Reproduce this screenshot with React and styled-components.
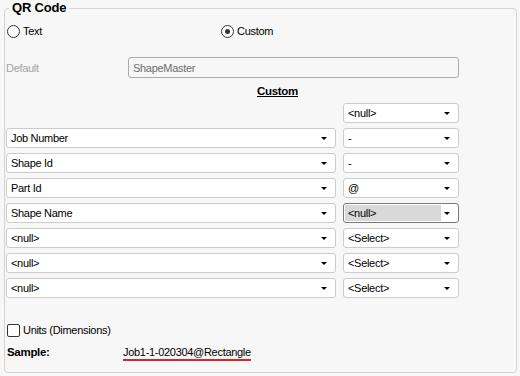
import React from "react";
import styled, { createGlobalStyle } from "styled-components";

const Global = createGlobalStyle`
  html, body { margin: 0; padding: 0; background: #f7f7f7; }
  body { font-family: "Liberation Sans", Arial, sans-serif; font-size: 11px; letter-spacing: -0.3px; color: #000; }
`;

const Page = styled.div`
  width: 520px;
  height: 376px;
  box-sizing: border-box;
  padding: 1px 3px 3px 4px;
  background: #f7f7f7;
`;

const Group = styled.fieldset`
  margin: 0;
  height: 100%;
  box-sizing: border-box;
  border: 1px solid #d3d3d3;
  border-radius: 4px;
  padding: 0 0 0 1px;
  display: flex;
  flex-direction: column;
`;

const Legend = styled.legend`
  margin-left: 3px;
  padding: 0 3px 0 3px;
  font-weight: bold;
  font-size: 13px;
  line-height: 14px;
  letter-spacing: -0.2px;
  color: #000;
`;

const RadioRow = styled.div`
  display: flex;
  align-items: center;
  height: 14px;
  margin-top: 9px;
`;

const RadioItem = styled.label`
  display: flex;
  align-items: center;
  gap: 3px;
  margin-left: ${(p) => p.$left || 0}px;
`;

const RadioCircle = styled.span`
  width: 11px;
  height: 11px;
  border-radius: 50%;
  border: 1px solid #333;
  background: #fff;
  display: flex;
  align-items: center;
  justify-content: center;
  &::after {
    content: "";
    width: 5px;
    height: 5px;
    border-radius: 50%;
    background: ${(p) => (p.$checked ? "#333" : "transparent")};
  }
`;

const DefaultRow = styled.div`
  display: flex;
  align-items: center;
  height: 21px;
  margin-top: 19px;
`;

const MutedLabel = styled.span`
  width: 122px;
  color: #a3a3a3;
`;

const TextBox = styled.div`
  width: 331px;
  height: 21px;
  box-sizing: border-box;
  border: 1px solid #ababab;
  border-radius: 3px;
  padding: 0 4px;
  display: flex;
  align-items: center;
  color: #6d6d6d;
  background: #f7f7f7;
`;

const Heading = styled.div`
  margin-top: 6px;
  height: 14px;
  line-height: 14px;
  padding-left: 251px;
  font-weight: bold;
  font-size: 11.5px;
  text-decoration: underline;
`;

const Grid = styled.div`
  display: grid;
  grid-template-columns: 330px 116px;
  column-gap: 7px;
  row-gap: 5px;
  margin-top: 5px;
`;

const Combo = styled.div`
  grid-column: ${(p) => p.$col};
  height: 20px;
  box-sizing: border-box;
  border: 1px solid ${(p) => (p.$focused ? "#7a7a7a" : "#cccccc")};
  border-radius: 3px;
  background: #fff;
  display: flex;
  align-items: center;
  padding: 1px;
`;

const ComboText = styled.div`
  flex: 1;
  height: 100%;
  display: flex;
  align-items: center;
  padding-left: 3px;
  background: ${(p) => (p.$focused ? "#d9d9d9" : "transparent")};
  margin-right: ${(p) => (p.$focused ? "-3px" : "0")};
  white-space: pre;
`;

const Arrow = styled.span`
  width: 0;
  height: 0;
  border-left: 3px solid transparent;
  border-right: 3px solid transparent;
  border-top: 3px solid #000;
  margin: 1px 7px 0 6px;
`;

const CheckRow = styled.label`
  display: flex;
  align-items: center;
  gap: 3px;
  margin-top: 25px;
  margin-left: 1px;
  height: 14px;
`;

const Box = styled.span`
  width: 11px;
  height: 11px;
  border: 1px solid #333;
  border-radius: 2px;
  background: #fff;
`;

const SampleRow = styled.div`
  display: flex;
  align-items: baseline;
  margin-top: 9px;
  margin-left: 1px;
`;

const SampleLabel = styled.span`
  width: 116px;
  font-weight: bold;
  font-size: 11.5px;
`;

const SampleValue = styled.span`
  padding-bottom: 1px;
  border-bottom: 2px solid #d9262a;
`;

const Dropdown = ({ col, value, focused }) => (
  <Combo $col={col} $focused={focused}>
    <ComboText $focused={focused}>{value}</ComboText>
    <Arrow />
  </Combo>
);

const rows = [
  [null, "<null>"],
  ["Job Number", "-"],
  ["Shape Id", "-"],
  ["Part Id", "@"],
  ["Shape Name", "<null>", true],
  ["<null>", "<Select>"],
  ["<null>", "<Select>"],
  ["<null>", "<Select>"],
];

export default function App() {
  return (
    <>
      <Global />
      <Page>
        <Group>
          <Legend>QR Code</Legend>
          <RadioRow>
            <RadioItem $left={1}>
              <RadioCircle />
              Text
            </RadioItem>
            <RadioItem $left={179}>
              <RadioCircle $checked />
              Custom
            </RadioItem>
          </RadioRow>
          <DefaultRow>
            <MutedLabel>Default</MutedLabel>
            <TextBox>ShapeMaster</TextBox>
          </DefaultRow>
          <Heading>Custom</Heading>
          <Grid>
            {rows.map(([left, right, focused], i) => (
              <React.Fragment key={i}>
                {left !== null && <Dropdown col={1} value={left} />}
                <Dropdown col={2} value={right} focused={focused} />
              </React.Fragment>
            ))}
          </Grid>
          <CheckRow>
            <Box />
            Units (Dimensions)
          </CheckRow>
          <SampleRow>
            <SampleLabel>Sample:</SampleLabel>
            <SampleValue>Job1-1-020304@Rectangle</SampleValue>
          </SampleRow>
        </Group>
      </Page>
    </>
  );
}
